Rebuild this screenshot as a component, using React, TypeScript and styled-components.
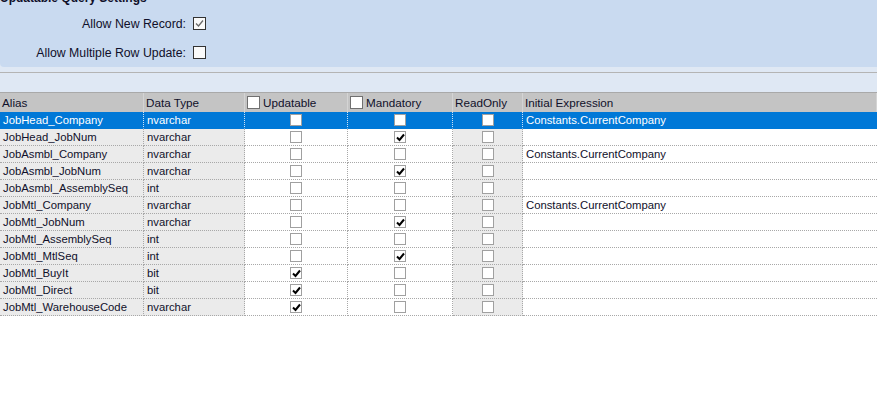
import React from 'react';
import styled, { createGlobalStyle, css } from 'styled-components';

const GlobalStyle = createGlobalStyle`
  html, body {
    margin: 0;
    padding: 0;
    background: #ffffff;
  }
  body {
    font-family: 'Liberation Sans', Arial, sans-serif;
    font-size: 12px;
    color: #10102a;
  }
`;

const Page = styled.div`
  width: 877px;
  height: 395px;
  overflow: hidden;
  background: #ffffff;
`;

const Settings = styled.div`
  background: #dfe8f4;
  padding-bottom: 5px;
`;

const SettingsPanel = styled.div`
  background: #c9daf0;
  border-bottom-left-radius: 4px;
  height: 67px;
  overflow: hidden;
`;

const PanelTitle = styled.div`
  margin-top: -9px;
  font-weight: bold;
  line-height: 14px;
  color: #10102a;
`;

const OptionGrid = styled.div`
  display: grid;
  grid-template-columns: 186px auto;
  grid-auto-rows: 29px;
  column-gap: 7px;
  align-items: center;
  justify-content: start;
  margin-top: 4px;
`;

const OptionLabel = styled.label`
  text-align: right;
  font-size: 12.3px;
  color: #10102a;
`;

const PanelCheck = styled.span`
  display: inline-flex;
  align-items: center;
  justify-content: center;
  width: 11px;
  height: 11px;
  border: 1px solid #333333;
  background: #fafafa;
`;

const Divider = styled.div`
  height: 1px;
  background: #b4b4b4;
`;

const Band = styled.div`
  height: 19px;
  background: #dfe8f4;
  border-bottom: 1px solid #a9a9a9;
`;

const Grid = styled.div`
  display: grid;
  grid-template-columns: 144px 101px 103px 105px 70px 1fr;
`;

const HeaderCell = styled.div`
  height: 19px;
  background: #c4c4c4;
  border-right: 1px solid #d4d4d4;
  display: flex;
  align-items: center;
  gap: 3px;
  padding-left: 2px;
  white-space: nowrap;
  font-size: 11.7px;
  color: #10102a;
  &:last-child {
    border-right: none;
  }
`;

type Tone = 'plain' | 'shaded' | 'selected';

const Cell = styled.div<{ $tone: Tone; $center?: boolean }>`
  height: 16px;
  border-right: 1px dotted #a8a8a8;
  border-bottom: 1px dotted #a8a8a8;
  display: flex;
  align-items: center;
  padding-left: 3px;
  white-space: nowrap;
  overflow: hidden;
  font-size: 11.3px;
  color: #10102a;
  background: ${(p) => (p.$tone === 'shaded' ? '#ebebeb' : '#ffffff')};
  ${(p) =>
    p.$center &&
    css`
      justify-content: center;
      padding-left: 0;
    `}
  ${(p) =>
    p.$tone === 'selected' &&
    css`
      background: #0078d7;
      color: #ffffff;
      border-right-color: #cfe3f5;
      border-bottom-color: #0078d7;
    `}
  &:nth-child(6n) {
    border-right: none;
  }
`;

const Box = styled.span<{ $header?: boolean }>`
  display: inline-flex;
  align-items: center;
  justify-content: center;
  box-sizing: border-box;
  width: ${(p) => (p.$header ? 13 : 12)}px;
  height: ${(p) => (p.$header ? 13 : 12)}px;
  border: 1px solid ${(p) => (p.$header ? '#707070' : '#a0a0a0')};
  background: #ffffff;
`;

const Tick = ({ color = '#000', width = 2 }: { color?: string; width?: number }) => (
  <svg width="9" height="9" viewBox="0 0 9 9">
    <path d="M1 4.5 L3.5 7 L8 1.5" fill="none" stroke={color} strokeWidth={width} />
  </svg>
);

const CheckBox = ({ checked, header }: { checked?: boolean; header?: boolean }) => (
  <Box $header={header}>{checked && <Tick />}</Box>
);

type Row = {
  alias: string;
  type: string;
  updatable?: boolean;
  mandatory?: boolean;
  expr?: string;
};

const rows: Row[] = [
  { alias: 'JobHead_Company', type: 'nvarchar', expr: 'Constants.CurrentCompany' },
  { alias: 'JobHead_JobNum', type: 'nvarchar', mandatory: true },
  { alias: 'JobAsmbl_Company', type: 'nvarchar', expr: 'Constants.CurrentCompany' },
  { alias: 'JobAsmbl_JobNum', type: 'nvarchar', mandatory: true },
  { alias: 'JobAsmbl_AssemblySeq', type: 'int' },
  { alias: 'JobMtl_Company', type: 'nvarchar', expr: 'Constants.CurrentCompany' },
  { alias: 'JobMtl_JobNum', type: 'nvarchar', mandatory: true },
  { alias: 'JobMtl_AssemblySeq', type: 'int' },
  { alias: 'JobMtl_MtlSeq', type: 'int', mandatory: true },
  { alias: 'JobMtl_BuyIt', type: 'bit', updatable: true },
  { alias: 'JobMtl_Direct', type: 'bit', updatable: true },
  { alias: 'JobMtl_WarehouseCode', type: 'nvarchar', updatable: true },
];

export default function App() {
  return (
    <Page>
      <GlobalStyle />
      <Settings>
        <SettingsPanel>
          <PanelTitle>Updatable Query Settings</PanelTitle>
          <OptionGrid>
            <OptionLabel>Allow New Record:</OptionLabel>
            <PanelCheck>
              <Tick color="#6a6a6a" width={1.3} />
            </PanelCheck>
            <OptionLabel>Allow Multiple Row Update:</OptionLabel>
            <PanelCheck />
          </OptionGrid>
        </SettingsPanel>
      </Settings>
      <Divider />
      <Band />
      <Grid>
        <HeaderCell>Alias</HeaderCell>
        <HeaderCell>Data Type</HeaderCell>
        <HeaderCell>
          <CheckBox header />
          Updatable
        </HeaderCell>
        <HeaderCell>
          <CheckBox header />
          Mandatory
        </HeaderCell>
        <HeaderCell>ReadOnly</HeaderCell>
        <HeaderCell>Initial Expression</HeaderCell>
        {rows.map((r, i) => {
          const sel = i === 0;
          const shade: Tone = sel ? 'selected' : 'shaded';
          const plain: Tone = sel ? 'selected' : 'plain';
          return (
            <React.Fragment key={r.alias}>
              <Cell $tone={shade}>{r.alias}</Cell>
              <Cell $tone={shade}>{r.type}</Cell>
              <Cell $tone={plain} $center>
                <CheckBox checked={r.updatable} />
              </Cell>
              <Cell $tone={plain} $center>
                <CheckBox checked={r.mandatory} />
              </Cell>
              <Cell $tone={shade} $center>
                <CheckBox />
              </Cell>
              <Cell $tone={plain}>{r.expr}</Cell>
            </React.Fragment>
          );
        })}
      </Grid>
    </Page>
  );
}
